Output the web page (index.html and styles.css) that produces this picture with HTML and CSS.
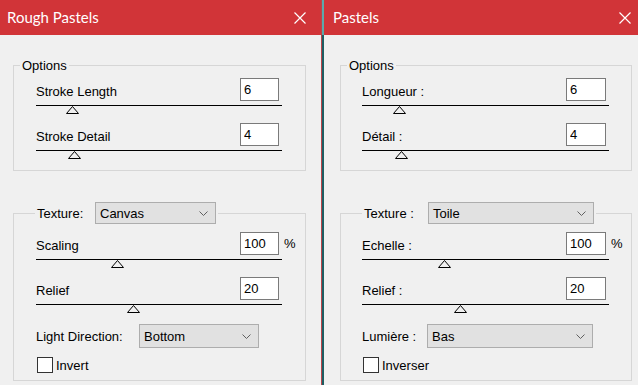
FILE: index.html
```html
<!DOCTYPE html>
<html>
<head>
    <meta charset="utf-8">
    <title>Pastels</title>
    <link rel="stylesheet" href="styles.css">
</head>
<body>
    <div class="desk">
        <section class="window win-en">
            <header class="titlebar">
                <span class="title">Rough Pastels</span>
                <svg class="close" viewBox="0 0 12 12"><path d="M0.5 0.5L11.5 11.5M11.5 0.5L0.5 11.5"/></svg>
            </header>
            <div class="content">
                <fieldset class="group options">
                    <legend>Options</legend>
                    <div class="group-body">
                        <div class="slider">
                            <div class="field-row"><label>Stroke Length</label><input class="num" value="6"></div>
                            <div class="track"><svg class="thumb" style="margin-left:30px" viewBox="0 0 13 8"><polygon points="6.5,0.5 12.5,7.5 0.5,7.5"/></svg></div>
                        </div>
                        <div class="slider">
                            <div class="field-row"><label>Stroke Detail</label><input class="num" value="4"></div>
                            <div class="track"><svg class="thumb" style="margin-left:32px" viewBox="0 0 13 8"><polygon points="6.5,0.5 12.5,7.5 0.5,7.5"/></svg></div>
                        </div>
                    </div>
                </fieldset>

                <fieldset class="group texture">
                    <legend>
                        <div class="legend-row">
                            <span class="lbl lbl-texture">Texture:</span>
                            <div class="dropdown dd-texture"><span>Canvas</span><svg class="chev" viewBox="0 0 9 5"><polyline points="0.5,0.5 4.5,4.5 8.5,0.5"/></svg></div>
                        </div>
                    </legend>
                    <div class="group-body">
                        <div class="slider">
                            <div class="field-row"><label>Scaling</label><input class="num" value="100"><span class="unit">%</span></div>
                            <div class="track"><svg class="thumb" style="margin-left:75px" viewBox="0 0 13 8"><polygon points="6.5,0.5 12.5,7.5 0.5,7.5"/></svg></div>
                        </div>
                        <div class="slider">
                            <div class="field-row"><label>Relief</label><input class="num" value="20"></div>
                            <div class="track"><svg class="thumb" style="margin-left:91px" viewBox="0 0 13 8"><polygon points="6.5,0.5 12.5,7.5 0.5,7.5"/></svg></div>
                        </div>
                        <div class="choice-row">
                            <span class="lbl lbl-light">Light Direction:</span>
                            <div class="dropdown dd-light"><span>Bottom</span><svg class="chev" viewBox="0 0 9 5"><polyline points="0.5,0.5 4.5,4.5 8.5,0.5"/></svg></div>
                        </div>
                        <label class="check-row"><input type="checkbox" class="check"><span>Invert</span></label>
                    </div>
                </fieldset>
            </div>
        </section>

        <div class="divider"></div>

        <section class="window win-fr">
            <header class="titlebar">
                <span class="title">Pastels</span>
                <svg class="close" viewBox="0 0 12 12"><path d="M0.5 0.5L11.5 11.5M11.5 0.5L0.5 11.5"/></svg>
            </header>
            <div class="content">
                <fieldset class="group options">
                    <legend>Options</legend>
                    <div class="group-body">
                        <div class="slider">
                            <div class="field-row"><label>Longueur :</label><input class="num" value="6"></div>
                            <div class="track"><svg class="thumb" style="margin-left:31px" viewBox="0 0 13 8"><polygon points="6.5,0.5 12.5,7.5 0.5,7.5"/></svg></div>
                        </div>
                        <div class="slider">
                            <div class="field-row"><label>Détail :</label><input class="num" value="4"></div>
                            <div class="track"><svg class="thumb" style="margin-left:33px" viewBox="0 0 13 8"><polygon points="6.5,0.5 12.5,7.5 0.5,7.5"/></svg></div>
                        </div>
                    </div>
                </fieldset>

                <fieldset class="group texture">
                    <legend>
                        <div class="legend-row">
                            <span class="lbl lbl-texture">Texture :</span>
                            <div class="dropdown dd-texture"><span>Toile</span><svg class="chev" viewBox="0 0 9 5"><polyline points="0.5,0.5 4.5,4.5 8.5,0.5"/></svg></div>
                        </div>
                    </legend>
                    <div class="group-body">
                        <div class="slider">
                            <div class="field-row"><label>Echelle :</label><input class="num" value="100"><span class="unit">%</span></div>
                            <div class="track"><svg class="thumb" style="margin-left:76px" viewBox="0 0 13 8"><polygon points="6.5,0.5 12.5,7.5 0.5,7.5"/></svg></div>
                        </div>
                        <div class="slider">
                            <div class="field-row"><label>Relief :</label><input class="num" value="20"></div>
                            <div class="track"><svg class="thumb" style="margin-left:92px" viewBox="0 0 13 8"><polygon points="6.5,0.5 12.5,7.5 0.5,7.5"/></svg></div>
                        </div>
                        <div class="choice-row">
                            <span class="lbl lbl-light">Lumière :</span>
                            <div class="dropdown dd-light"><span>Bas</span><svg class="chev" viewBox="0 0 9 5"><polyline points="0.5,0.5 4.5,4.5 8.5,0.5"/></svg></div>
                        </div>
                        <label class="check-row"><input type="checkbox" class="check"><span>Inverser</span></label>
                    </div>
                </fieldset>
            </div>
        </section>
    </div>
</body>
</html>
```

FILE: styles.css
```css
* {
    box-sizing: border-box;
}

body {
    margin: 0;
    background: #f0f0f0;
    color: #000;
    font-family: "Liberation Sans", Arial, sans-serif;
    font-size: 13px;
    line-height: 15px;
}

.desk {
    display: flex;
    height: 385px;
    overflow: hidden;
}

.window {
    display: flex;
    flex-direction: column;
    background: #f0f0f0;
}

.win-en {
    width: 321px;
}

.win-fr {
    flex: 1;
    min-width: 0;
}

.divider {
    width: 3px;
    border-left: 1px solid #b8454a;
    background: linear-gradient(#5ea8aa 0 35px, #1d5e63 35px);
}

/* title bar */
.titlebar {
    height: 35px;
    flex: none;
    display: flex;
    align-items: center;
    justify-content: space-between;
    background: #d13438;
    color: #fff;
    font-family: Lato, "Noto Sans", sans-serif;
    font-size: 15px;
    padding: 0 15px 0 7px;
}

.win-fr .titlebar {
    padding: 0 7px 0 9px;
}

.close {
    width: 12px;
    height: 12px;
    stroke: #fff;
    stroke-width: 1.2;
    fill: none;
}

/* content */
.content {
    padding: 23px 15px 0 13px;
}

.win-fr .content {
    padding: 23px 6px 0 16px;
}

.group {
    margin: 0;
    padding: 0;
    min-width: 0;
    border: 1px solid #d6d6d6;
}

.group + .group {
    margin-top: 31px;
}

.group legend {
    padding: 0 2px;
}

.options legend {
    margin-left: 6px;
}

.texture legend {
    margin-left: 21px;
}

.legend-row {
    display: flex;
    align-items: center;
}

.options .group-body {
    padding: 5px 23px 11px 22px;
}

.texture .group-body {
    padding: 8px 23px 7px 22px;
}

.win-fr .group-body {
    padding-left: 21px;
    padding-right: 22px;
}

/* sliders */
.slider + .slider {
    margin-top: 9px;
}

.field-row {
    display: flex;
    align-items: flex-end;
    height: 23px;
    padding-right: 3px;
}

.field-row label {
    flex: 1;
    margin-bottom: 2px;
}

.num {
    width: 39px;
    height: 23px;
    margin: 0;
    padding: 0 0 0 3px;
    border: 1px solid #7a7a7a;
    background: #fff;
    font: inherit;
    color: #000;
    outline: none;
}

.win-fr .num {
    width: 40px;
}

.unit {
    width: 8px;
    margin-left: 5px;
    margin-right: -13px;
    margin-bottom: 4px;
}

.track {
    margin-top: 4px;
    border-top: 1px solid #000;
}

.thumb {
    display: block;
    width: 13px;
    height: 8px;
    fill: none;
    stroke: #000;
    stroke-width: 1;
}

/* dropdowns */
.dropdown {
    display: flex;
    align-items: center;
    justify-content: space-between;
    height: 22px;
    border: 1px solid #adadad;
    background: #e1e1e1;
    padding: 0 7px 0 4px;
}

.chev {
    width: 9px;
    height: 5px;
    fill: none;
    stroke: #606060;
    stroke-width: 1;
}

.lbl-texture {
    width: 58px;
}

.dd-texture {
    width: 121px;
}

.win-fr .lbl-texture {
    width: 64px;
}

.win-fr .dd-texture {
    width: 166px;
}

.choice-row {
    display: flex;
    align-items: center;
    margin-top: 11px;
}

.lbl-light {
    width: 103px;
}

.dd-light {
    width: 120px;
    height: 24px;
}

.win-fr .lbl-light {
    width: 65px;
}

.win-fr .dd-light {
    width: 166px;
}

/* checkbox */
.check-row {
    display: flex;
    align-items: center;
    gap: 3px;
    margin-top: 9px;
}

.check {
    appearance: none;
    width: 16px;
    height: 16px;
    margin: 0 0 0 1px;
    border: 1px solid #333;
    background: #fff;
}
```
